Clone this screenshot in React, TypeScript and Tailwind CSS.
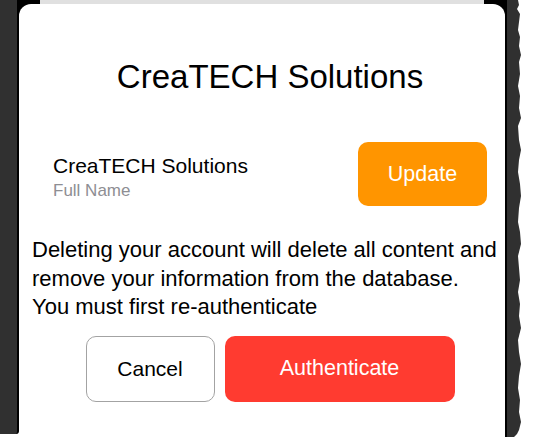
import React from 'react';

const font = { fontFamily: '"Liberation Sans", Arial, sans-serif' };

const TornEdge: React.FC = () => (
  <svg width="18" height="438" viewBox="0 0 18 438" className="block shrink-0">
    <rect x="0" y="0" width="2" height="437" fill="#000" />
    <polygon
      fill="#303030"
      points="2,0 13,0 14,5 12,9 15,14 14,22 13,30 15,37 14,46 16,55 14,62 15,74 13,86 15,96 14,108 16,118 13,126 14,140 16,150 14,160 13,172 15,184 16,196 14,208 13,222 15,232 16,244 13,256 14,268 15,280 13,292 15,304 14,316 16,328 13,340 14,352 16,364 14,376 13,388 15,400 14,412 16,422 14,430 12,434 9,437 2,437"
    />
  </svg>
);

export default function App() {
  return (
    <div className="w-[538px] h-[438px] bg-white flex overflow-hidden" style={font}>
      {/* left frame */}
      <div className="w-[19px] h-[434px] shrink-0 bg-[#303030] border-r-2 border-black rounded-br-[3px]" />

      {/* main column */}
      <div className="w-[486px] shrink-0 flex flex-col bg-black">
        <div className="h-[4px] flex">
          <div className="w-[21px]" />
          <div className="flex-1 bg-[#e0e0e0]" />
          <div className="w-[21px]" />
        </div>

        <div className="flex-1 bg-white rounded-t-[12px] flex flex-col">
          <h1 className="pt-[53px] pl-[16px] text-center text-[33px] leading-[40px] text-black font-normal">
            CreaTECH Solutions
          </h1>

          <div className="mt-[45px] flex justify-between items-start pl-[34px] pr-[18px]">
            <div className="pt-[11px] flex flex-col">
              <span className="text-[21px] leading-[25px] text-black">CreaTECH Solutions</span>
              <span className="mt-[3px] text-[17px] leading-[20px] text-[#8e8e93]">Full Name</span>
            </div>
            <button className="w-[129px] h-[64px] rounded-[10px] bg-[#ff9500] text-white text-[21.5px]">
              Update
            </button>
          </div>

          <p className="mt-[30px] pl-[13px] text-[22px] leading-[28.5px] text-black">
            Deleting your account will delete all content and
            <br />
            remove your information from the database.
            <br />
            You must first re-authenticate
          </p>

          <div className="mt-[14px] flex justify-center gap-[10px] pl-[16px]">
            <button className="w-[129px] h-[66px] rounded-[10px] border border-[#a3a3a3] bg-white text-black text-[21px]">
              Cancel
            </button>
            <button className="w-[230px] h-[66px] rounded-[10px] bg-[#ff3b30] text-white text-[21.5px]">
              Authenticate
            </button>
          </div>
        </div>
      </div>

      <TornEdge />
    </div>
  );
}
